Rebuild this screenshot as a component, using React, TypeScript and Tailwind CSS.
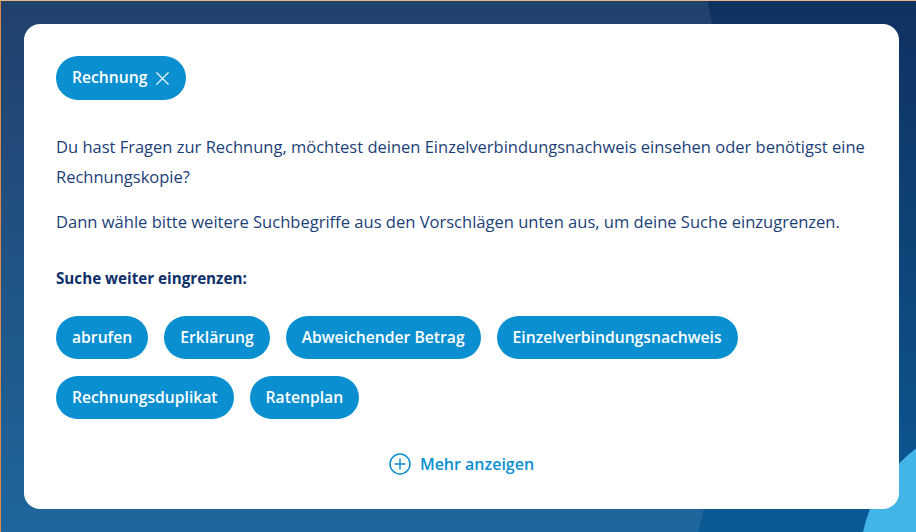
import React from 'react';

const chips = [
  'abrufen',
  'Erklärung',
  'Abweichender Betrag',
  'Einzelverbindungsnachweis',
  'Rechnungsduplikat',
  'Ratenplan',
];

function Chip({ label }: { label: string }) {
  return (
    <button
      type="button"
      className="h-[43px] px-4 rounded-full bg-[#0a8fd0] text-white text-[15.7px] font-semibold leading-none"
    >
      {label}
    </button>
  );
}

export default function App() {
  return (
    <div
      className="relative w-[916px] h-[532px] overflow-hidden border-t border-l border-t-[#e6b98a] border-l-[#dc8a4c] bg-gradient-to-b from-[#0f3160] to-[#0a5a96]"
      style={{ fontFamily: '"Open Sans", "Noto Sans", sans-serif' }}
    >
      {/* background shapes */}
      <div className="absolute left-[-1668px] top-[-955px] w-[2400px] h-[2400px] rounded-full bg-white/[0.08]" />
      <div className="absolute left-[859px] top-[419px] w-[282px] h-[282px] rounded-full bg-[#42b4e6]" />

      <div className="relative ml-[23px] mt-[23px] w-[875px] h-[485px] rounded-2xl bg-white px-8 pt-8">
        <div className="flex">
          <button
            type="button"
            className="flex h-11 items-center gap-2 rounded-full bg-[#0a8fd0] pl-4 pr-4 text-[15.7px] font-semibold text-white"
          >
            Rechnung
            <svg width="15" height="15" viewBox="0 0 16 16" fill="none" stroke="currentColor" strokeWidth="1.4">
              <path d="M1.5 1.5l13 13M14.5 1.5l-13 13" />
            </svg>
          </button>
        </div>

        <p className="mt-8 text-[16.5px] leading-[30px] text-[#1c3f78]">
          Du hast Fragen zur Rechnung, möchtest deinen Einzelverbindungsnachweis einsehen oder benötigst eine
          Rechnungskopie?
        </p>
        <p className="mt-[15px] text-[16.55px] leading-[30px] text-[#1c3f78]">
          Dann wähle bitte weitere Suchbegriffe aus den Vorschlägen unten aus, um deine Suche einzugrenzen.
        </p>

        <h3 className="mt-[29px] text-[15.2px] font-bold leading-6 text-[#0d2f6a]">Suche weiter eingrenzen:</h3>

        <div className="mt-[26px] flex flex-wrap gap-x-4 gap-y-[17px]">
          {chips.map((c) => (
            <Chip key={c} label={c} />
          ))}
        </div>

        <div className="mt-[33px] flex justify-center">
          <button type="button" className="flex items-center gap-[9px] text-[16px] font-semibold text-[#0a8fd0]">
            <svg width="22" height="22" viewBox="0 0 22 22" fill="none" stroke="currentColor" strokeWidth="1.5">
              <circle cx="11" cy="11" r="10" />
              <path d="M11 5.5v11M5.5 11h11" />
            </svg>
            Mehr anzeigen
          </button>
        </div>
      </div>
    </div>
  );
}
